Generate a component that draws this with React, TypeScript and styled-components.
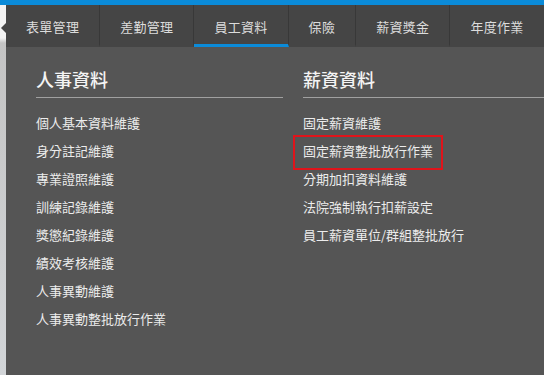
import styled, { createGlobalStyle } from 'styled-components';

const GlobalStyle = createGlobalStyle`
  html, body {
    margin: 0;
    padding: 0;
    background: #c9c9c9;
    font-family: "Noto Sans CJK TC", "Noto Sans", sans-serif;
  }
`;

const Page = styled.div`
  width: 544px;
  height: 375px;
  overflow: hidden;
  display: flex;
  flex-direction: column;
`;

const TopBar = styled.div`
  height: 5px;
  background: #0b8bd9;
  flex-shrink: 0;
`;

const Body = styled.div`
  flex: 1;
  display: flex;
`;

const SideStrip = styled.div`
  width: 6px;
  flex-shrink: 0;
  background: linear-gradient(to bottom, #f3f3f3 0, #f3f3f3 33px, #c4c4c4 38px, #d2d5d8 100%);
`;

const Main = styled.div`
  flex: 1;
  display: flex;
  flex-direction: column;
  min-width: 0;
`;

const Nav = styled.nav`
  position: relative;
  height: 42px;
  display: flex;
  background: #454545;
  flex-shrink: 0;

  &::before {
    content: '';
    position: absolute;
    left: -5px;
    top: 18px;
    border-top: 5px solid transparent;
    border-bottom: 5px solid transparent;
    border-right: 5px solid #454545;
  }
`;

const Tab = styled.div<{ $active?: boolean }>`
  box-sizing: border-box;
  height: 42px;
  padding: 3px 20px 0;
  display: flex;
  align-items: center;
  flex-shrink: 0;
  font-size: 13px;
  letter-spacing: 0.3px;
  color: #dcdcdc;
  border-right: 1px solid #383838;
  border-bottom: 3px solid ${(p) => (p.$active ? '#0b8bd9' : 'transparent')};
`;

const Panel = styled.div`
  flex: 1;
  background: #555555;
  padding: 20px 0 0 30px;
  display: grid;
  grid-template-columns: 247px 247px;
  column-gap: 20px;
  align-content: start;
`;

const Column = styled.section`
  display: flex;
  flex-direction: column;
`;

const Heading = styled.h2`
  margin: 0;
  font-size: 18px;
  font-weight: 500;
  line-height: 24px;
  color: #f4f4f4;
  padding-bottom: 6px;
  border-bottom: 1px solid #a0a0a0;
`;

const List = styled.ul`
  list-style: none;
  margin: 11px 0 0;
  padding: 0;
`;

const Item = styled.li`
  font-size: 13px;
  line-height: 28px;
  color: #ececec;
`;

const ItemLabel = styled.span<{ $marked?: boolean }>`
  position: relative;
  display: inline-block;

  ${(p) =>
    p.$marked &&
    `
    &::after {
      content: '';
      position: absolute;
      left: -10px;
      right: -10px;
      top: -2px;
      bottom: -5px;
      border: 2px solid #e0141b;
    }
  `}
`;

const tabs = ['表單管理', '差勤管理', '員工資料', '保險', '薪資獎金', '年度作業'];

const personnel = [
  '個人基本資料維護',
  '身分註記維護',
  '專業證照維護',
  '訓練記錄維護',
  '獎懲紀錄維護',
  '績效考核維護',
  '人事異動維護',
  '人事異動整批放行作業',
];

const salary = [
  '固定薪資維護',
  '固定薪資整批放行作業',
  '分期加扣資料維護',
  '法院強制執行扣薪設定',
  '員工薪資單位/群組整批放行',
];

const App = () => {
  return (
    <Page>
      <GlobalStyle />
      <TopBar />
      <Body>
        <SideStrip />
        <Main>
          <Nav>
            {tabs.map((t) => (
              <Tab key={t} $active={t === '員工資料'}>
                {t}
              </Tab>
            ))}
          </Nav>
          <Panel>
            <Column>
              <Heading>人事資料</Heading>
              <List>
                {personnel.map((i) => (
                  <Item key={i}>
                    <ItemLabel>{i}</ItemLabel>
                  </Item>
                ))}
              </List>
            </Column>
            <Column>
              <Heading>薪資資料</Heading>
              <List>
                {salary.map((i) => (
                  <Item key={i}>
                    <ItemLabel $marked={i === '固定薪資整批放行作業'}>{i}</ItemLabel>
                  </Item>
                ))}
              </List>
            </Column>
          </Panel>
        </Main>
      </Body>
    </Page>
  );
};

export default App;
